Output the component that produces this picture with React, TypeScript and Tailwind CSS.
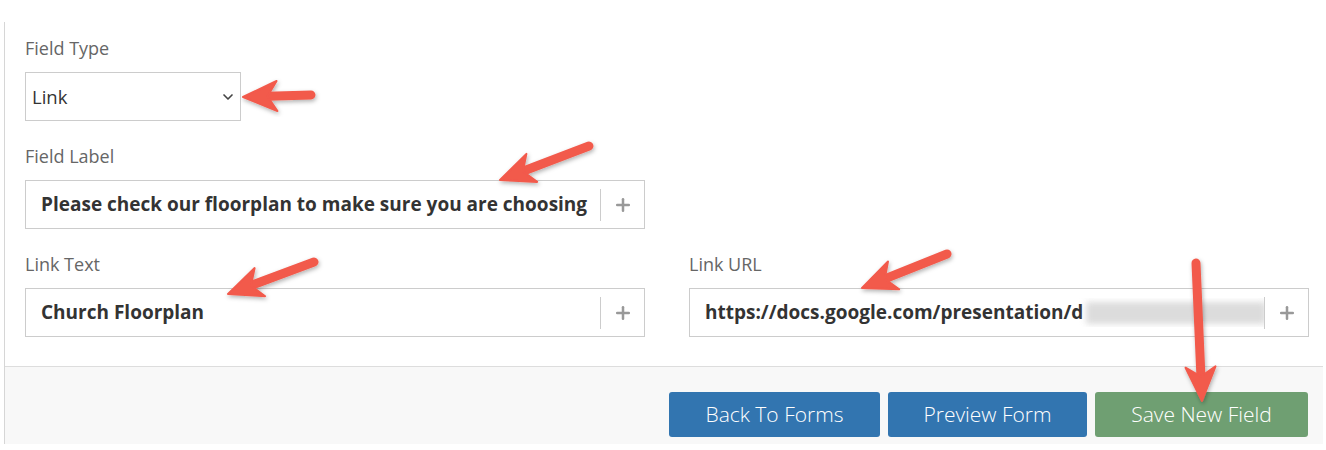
import { ChevronDown, Plus } from "lucide-react";

type Pt = [number, number];

// annotation arrows, tail -> tip
const arrows: { tail: Pt; tip: Pt }[] = [
  { tail: [311, 95], tip: [243, 97] },
  { tail: [589, 146], tip: [500, 180] },
  { tail: [314, 262], tip: [228, 294] },
  { tail: [947, 254], tip: [862, 288] },
  { tail: [1196, 263], tip: [1202, 401] },
];

function Arrow({ tail, tip }: { tail: Pt; tip: Pt }) {
  const dx = tip[0] - tail[0];
  const dy = tip[1] - tail[1];
  const len = Math.hypot(dx, dy);
  const ux = dx / len;
  const uy = dy / len;
  const nx = -uy;
  const ny = ux;
  const L = 34;
  const W = 15;
  const bx = tip[0] - ux * L;
  const by = tip[1] - uy * L;
  const notchX = tip[0] - ux * L * 0.72;
  const notchY = tip[1] - uy * L * 0.72;
  const head = [
    [tip[0], tip[1]],
    [bx + nx * W, by + ny * W],
    [notchX, notchY],
    [bx - nx * W, by - ny * W],
  ]
    .map((p) => p.join(","))
    .join(" ");
  return (
    <g filter="url(#shadow)">
      <line x1={tail[0]} y1={tail[1]} x2={notchX} y2={notchY} stroke="#f25a4c" strokeWidth={9} strokeLinecap="round" />
      <polygon points={head} fill="#f25a4c" strokeLinejoin="round" stroke="#f25a4c" strokeWidth={2} />
    </g>
  );
}

function FieldLabel({ children }: { children: React.ReactNode }) {
  return <div className="text-[18px] leading-6 text-[#666] mb-3">{children}</div>;
}

function AddonInput({ value, blurred }: { value: string; blurred?: boolean }) {
  return (
    <div className="flex items-center h-[49px] border border-[#ccc] bg-white">
      <div className="flex-1 min-w-0 pl-[15px] flex items-center overflow-hidden whitespace-nowrap text-[19px] font-bold text-[#333]">
        <span>{value}</span>
        {blurred && <span className="ml-[3px] h-[22px] w-[180px] shrink-0 bg-[#dcdcdc] blur-[3px]" />}
      </div>
      <div className="flex items-center h-[32px] border-l border-[#ccc] w-[44px] justify-center text-[#999]">
        <Plus size={20} strokeWidth={3} />
      </div>
    </div>
  );
}

export default function App() {
  return (
    <div className="relative w-[1326px] h-[450px] bg-white overflow-hidden" style={{ fontFamily: '"Open Sans", sans-serif' }}>
      <div className="ml-[4px] mt-[22px] w-[1319px] border-l border-[#d6d6d6]">
        {/* Form body */}
        <div className="pl-[20px] pr-[14px] pt-[14px] pb-[29px]">
          <FieldLabel>Field Type</FieldLabel>
          <div className="flex items-center justify-between w-[216px] h-[49px] border border-[#ccc] pl-[6px] pr-[4px] text-[18.5px] text-[#333]">
            <span>Link</span>
            <ChevronDown size={16} strokeWidth={2.5} className="text-[#444]" />
          </div>

          <div className="mt-[23px]">
            <FieldLabel>Field Label</FieldLabel>
            <div className="w-[620px]">
              <AddonInput value="Please check our floorplan to make sure you are choosing" />
            </div>
          </div>

          <div className="mt-[23px] grid grid-cols-[620px_620px] gap-x-[44px]">
            <div>
              <FieldLabel>Link Text</FieldLabel>
              <AddonInput value="Church Floorplan" />
            </div>
            <div>
              <FieldLabel>Link URL</FieldLabel>
              <AddonInput value="https://docs.google.com/presentation/d" blurred />
            </div>
          </div>
        </div>

        {/* Footer */}
        <div className="border-t border-[#ddd] bg-[#f8f8f8] h-[78px] flex justify-end items-start pt-[25px] pr-[15px] gap-[8px]">
          <button className="h-[45px] w-[211px] rounded-[3px] bg-[#3275b0] text-white text-[21px] font-light">Back To Forms</button>
          <button className="h-[45px] w-[199px] rounded-[3px] bg-[#3275b0] text-white text-[21px] font-light">Preview Form</button>
          <button className="h-[45px] w-[213px] rounded-[3px] bg-[#6f9f72] text-white text-[21px] font-light">Save New Field</button>
        </div>
      </div>

      {/* Annotation arrows */}
      <svg className="absolute inset-0 pointer-events-none" width={1326} height={450}>
        <defs>
          <filter id="shadow" x="-20%" y="-20%" width="140%" height="140%">
            <feDropShadow dx="1" dy="2" stdDeviation="2" floodColor="#000" floodOpacity="0.3" />
          </filter>
        </defs>
        {arrows.map((a, i) => (
          <Arrow key={i} tail={a.tail} tip={a.tip} />
        ))}
      </svg>
    </div>
  );
}
